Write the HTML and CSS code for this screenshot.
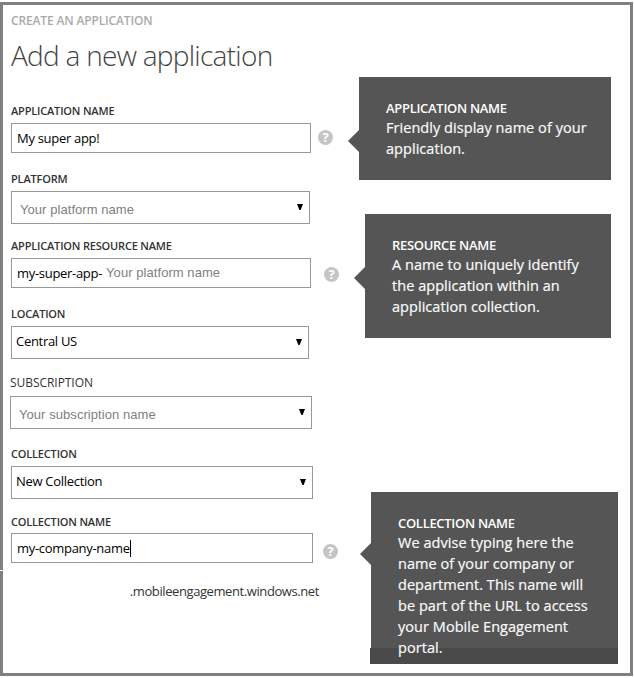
FILE: index.html
```html
<!DOCTYPE html>
<html lang="en">
<head>
<meta charset="utf-8">
<title>Add a new application</title>
<link rel="stylesheet" href="styles.css">
</head>
<body>
<main class="dialog">
  <p class="eyebrow"><span>CREATE AN APPLICATION</span></p>
  <h1 class="title"><span>Add a new application</span></h1>

  <section class="field app-name">
    <div class="label"><span>APPLICATION NAME</span></div>
    <div class="row">
      <div class="box"><span class="value">My super app!</span></div>
      <i class="help">?</i>
    </div>
    <aside class="callout"><b>APPLICATION NAME</b><p><span>Friendly display name of your</span><br><span>application.</span></p></aside>
  </section>

  <section class="field platform">
    <div class="label"><span>PLATFORM</span></div>
    <div class="box select"><span class="hint">Your platform name</span><svg class="arrow" viewBox="0 0 6 6"><path d="M0 0H6L3.6 6H2.4Z"/></svg></div>
  </section>

  <section class="field resource">
    <div class="label"><span>APPLICATION RESOURCE NAME</span></div>
    <div class="row">
      <div class="box"><span class="value">my-super-app-</span><span class="hint">Your platform name</span></div>
      <i class="help">?</i>
    </div>
    <aside class="callout"><b>RESOURCE NAME</b><p><span>A name to uniquely identify</span><br><span>the application within an</span><br><span>application collection.</span></p></aside>
  </section>

  <section class="field location">
    <div class="label"><span>LOCATION</span></div>
    <div class="box select"><span class="value">Central US</span><svg class="arrow" viewBox="0 0 6 6"><path d="M0 0H6L3.6 6H2.4Z"/></svg></div>
  </section>

  <section class="field subscription">
    <div class="label"><span>SUBSCRIPTION</span></div>
    <div class="box select"><span class="hint">Your subscription name</span><svg class="arrow" viewBox="0 0 6 6"><path d="M0 0H6L3.6 6H2.4Z"/></svg></div>
  </section>

  <section class="field collection">
    <div class="label"><span>COLLECTION</span></div>
    <div class="box select"><span class="value">New Collection</span><svg class="arrow" viewBox="0 0 6 6"><path d="M0 0H6L3.6 6H2.4Z"/></svg></div>
  </section>

  <section class="field coll-name">
    <div class="label"><span>COLLECTION NAME</span></div>
    <div class="row">
      <div class="box"><span class="value">my-company-name</span><i class="caret"></i></div>
      <i class="help">?</i>
    </div>
    <aside class="callout"><b>COLLECTION NAME</b><p><span>We advise typing here the</span><br><span>name of your company or</span><br><span>department. This name will</span><br><span>be part of the URL to access</span><br><span>your Mobile Engagement</span><br><span>portal.</span></p></aside>
  </section>
  <p class="suffix"><span>.mobileengagement.windows.net</span></p>
</main>
</body>
</html>
```
FILE: styles.css
```css
* { box-sizing: border-box; }
body { margin: 0; padding-top: 2px; background: #fff; font-family: "Open Sans", "Noto Sans", sans-serif; overflow: hidden; }
p, h1 { margin: 0; }
.dialog { position: relative; width: 633px; height: 674px; border: 3px solid #808080; padding: 7px 0 0 8px; }
.dialog::before { content: ""; position: absolute; left: -3px; top: 565px; width: 3px; height: 1px; background: #fff; }
.eyebrow { height: 16px; font-size: 12px; font-weight: 600; line-height: 17px; color: #aaa; letter-spacing: -.15px; }
.title { height: 75px; padding-top: 8px; font-size: 28px; font-weight: 300; line-height: 38px; color: #444; letter-spacing: -.72px; }
.field { position: relative; }
.label { height: 16px; margin-bottom: 4px; font-size: 11px; font-weight: 600; line-height: 16px; color: #333; letter-spacing: -.18px; }
.row { display: flex; }
.box { display: flex; align-items: center; width: 300px; height: 30px; border: 1px solid #999; padding-left: 5px; white-space: nowrap; }
.select { height: 33px; padding-left: 4px; padding-bottom: 2px; }
.value { font-size: 13px; line-height: 18px; color: #000; letter-spacing: -.3px; }
.select .value { margin-top: -2px; letter-spacing: -.3px; }
.hint { font-family: "Liberation Sans", sans-serif; font-size: 13px; line-height: 18px; color: #808080; letter-spacing: .06px; }
.select .hint { margin: 7px 0 0 4px; }
.arrow { width: 6px; height: 6px; margin: 0 6px 0 auto; }
.help { width: 15px; height: 15px; margin: 7px 0 0 7px; border-radius: 50%; background: #c5c5c5; color: #fff; font-size: 13px; font-weight: 700; font-style: normal; line-height: 15px; text-align: center; }
.platform { margin-top: 18px; }
.platform .box { width: 299px; }
.resource { margin-top: 14px; }
.resource .hint { margin: 0 0 0 4px; }
.resource .help { margin: 9px 0 0 13px; }
.location { margin-top: 18px; }
.location .box { width: 298px; }
.subscription { margin: 15px 0 0 -1px; }
.subscription .label { margin-bottom: 6px; font-size: 12px; font-weight: 500; line-height: 18px; letter-spacing: -.05px; }
.subscription .box { width: 302px; }
.collection { margin-top: 17px; }
.collection .box, .coll-name .box { width: 302px; }
.coll-name { margin-top: 15px; }
.coll-name .label { margin-bottom: 3px; }
.coll-name .help { margin: 11px 0 0 10px; }
.caret { width: 1px; height: 17px; background: #000; }
.suffix { width: 308px; margin-top: 20px; font-size: 13px; line-height: 16px; text-align: right; color: #333; letter-spacing: -.41px; }
.callout { position: absolute; left: 348px; top: -26px; width: 252px; height: 103px; padding: 21px 0 0 27px; background: #555; color: #fafafa; white-space: nowrap; }
.callout::before { content: ""; position: absolute; left: -11px; top: 53px; border: solid transparent; border-width: 11px 11px 11px 0; border-right-color: #555; }
.callout b { display: block; height: 19px; font-size: 13px; font-weight: 600; line-height: 21px; color: #fff; letter-spacing: -.3px; }
.callout p { font-size: 14.5px; line-height: 21px; letter-spacing: .05px; -webkit-text-stroke: .2px #fafafa; }
.resource .callout { left: 354px; top: -24px; width: 246px; height: 124px; }
.coll-name .callout { left: 360px; top: -22px; width: 247px; height: 172px; }
.coll-name .callout::before { top: 51px; }
.coll-name .callout::after { content: ""; position: absolute; left: -1px; right: 0; bottom: 0; height: 16px; background: #4a4a4a; }
.coll-name .callout p { position: relative; z-index: 1; }
```
